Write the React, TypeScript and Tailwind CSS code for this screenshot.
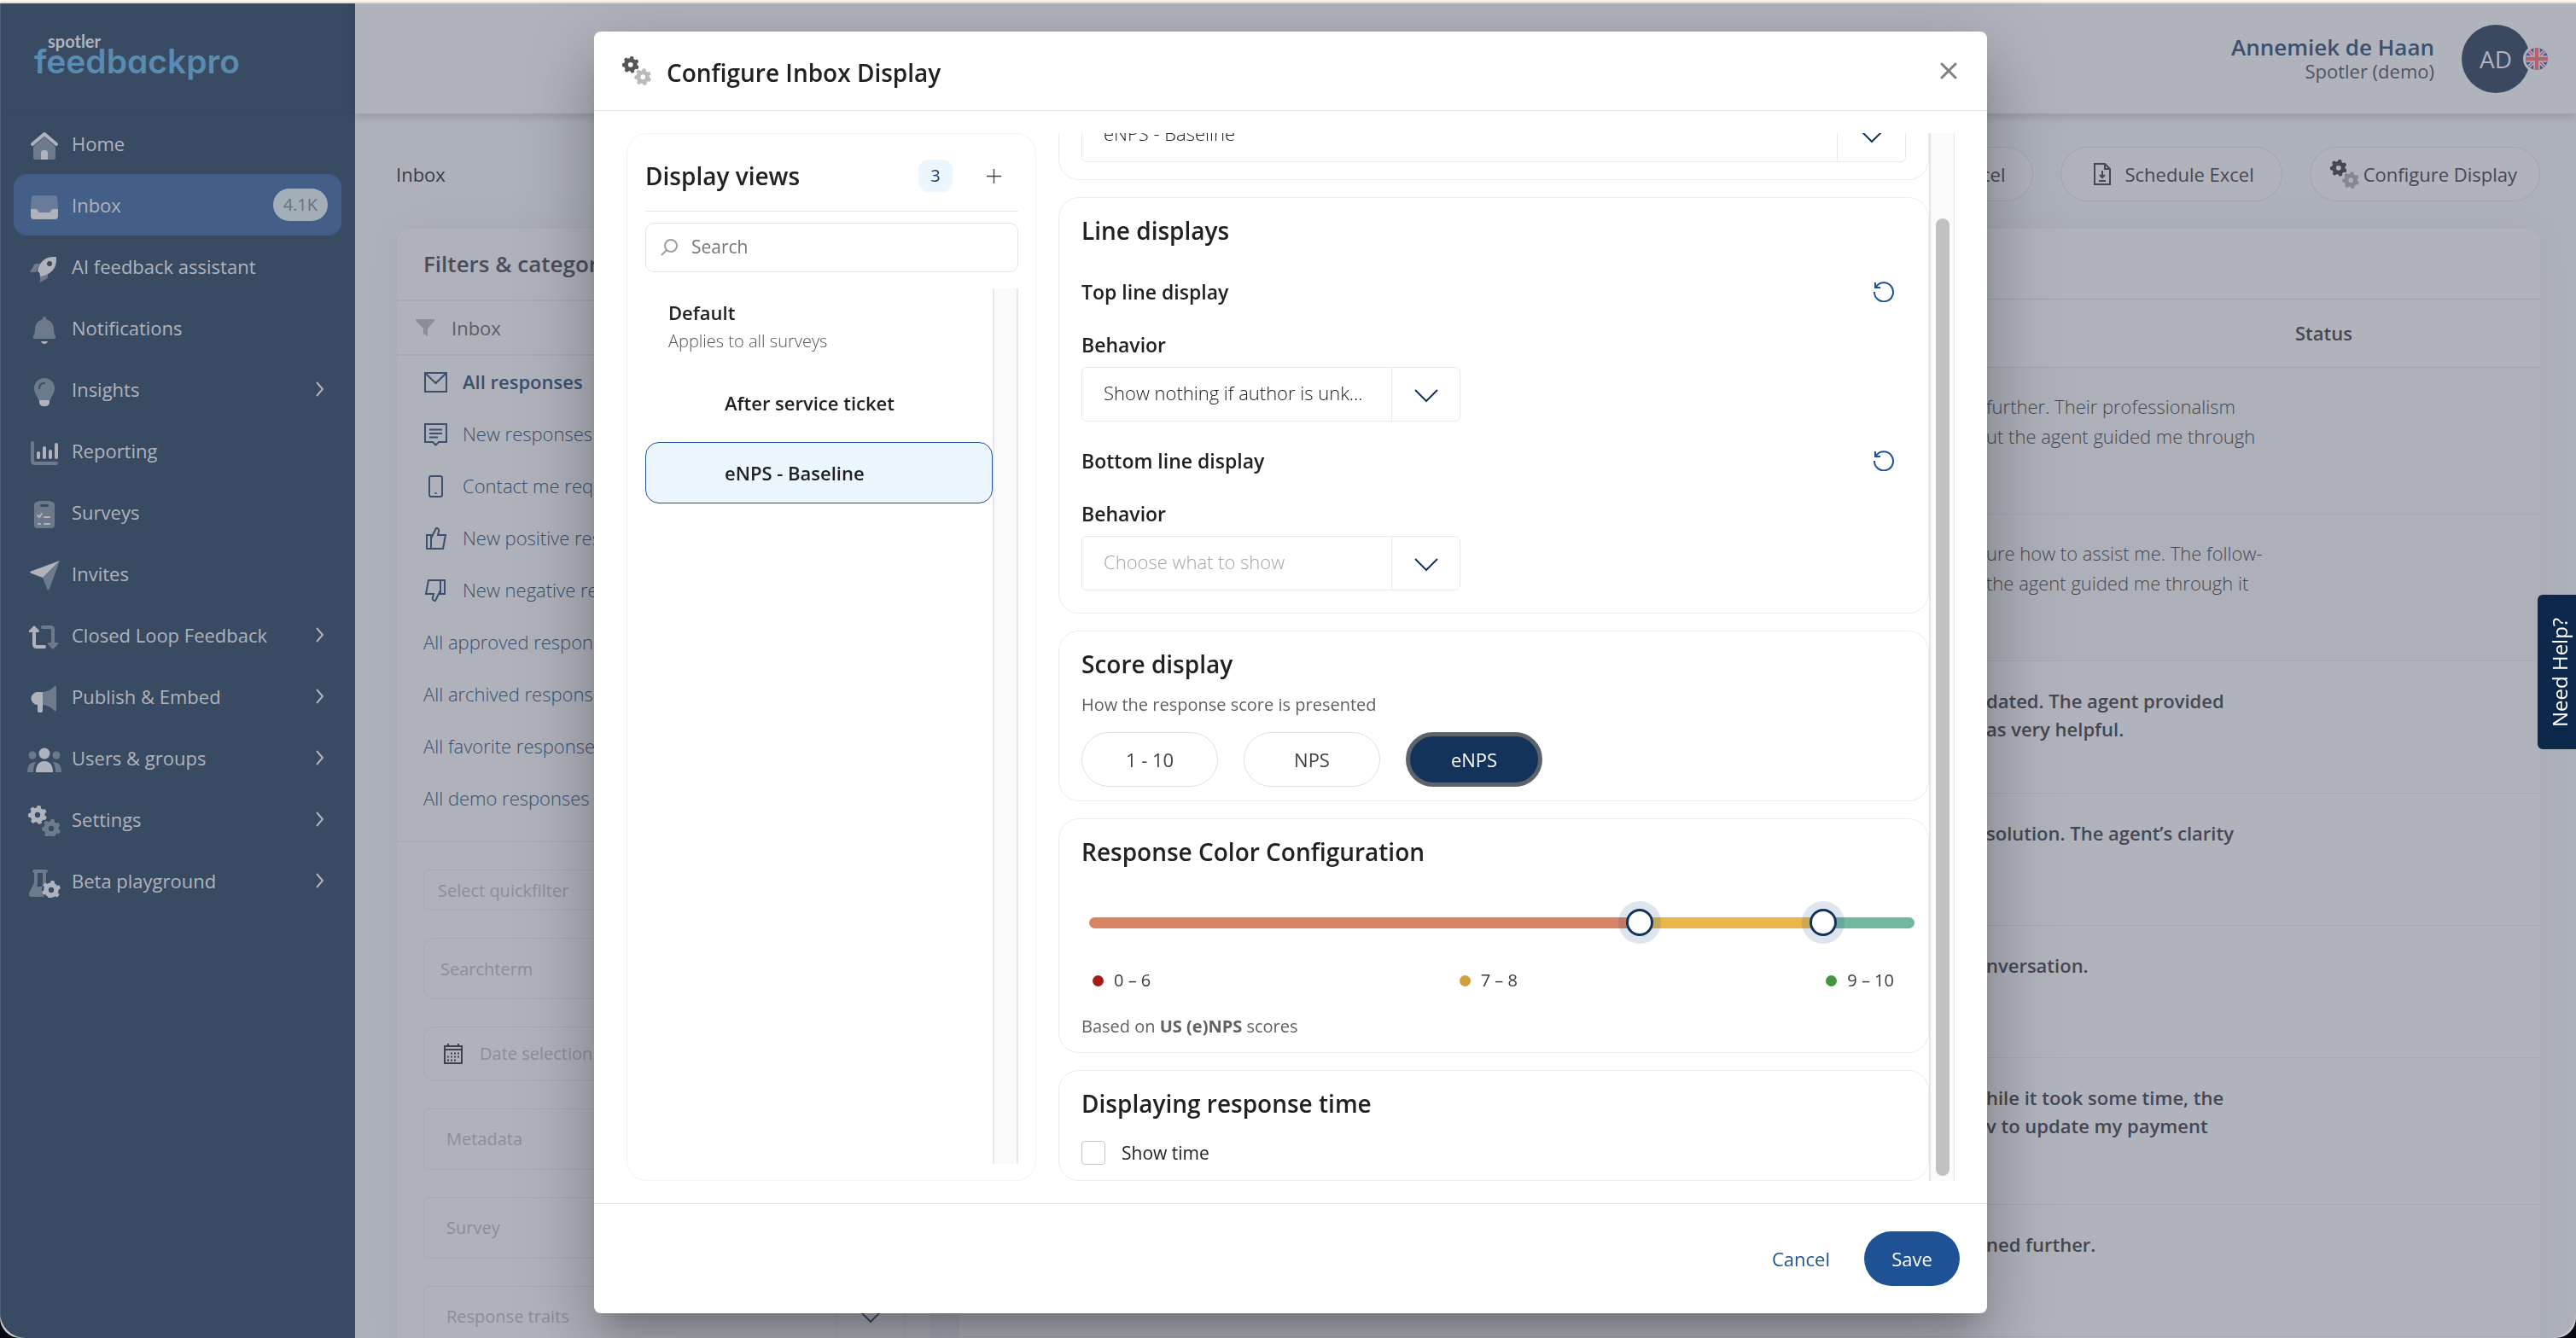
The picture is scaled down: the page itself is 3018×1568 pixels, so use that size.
import { useState, type ReactNode } from 'react'

const SIDEBAR_BG = '#384b63'

type GearProps = { cx: number; cy: number; r: number; teeth?: number; opacity?: number }

const Gear = ({ cx, cy, r, teeth = 7, opacity = 1 }: GearProps) => (
  <g opacity={opacity} transform={`translate(${cx} ${cy})`}>
    <circle r={r * 0.54} fill="none" stroke="currentColor" strokeWidth={r * 0.5} />
    {Array.from({ length: teeth }, (_, i) => (
      <rect
        key={i}
        x={-r * 0.22}
        y={-r}
        width={r * 0.44}
        height={r * 0.45}
        rx={r * 0.14}
        fill="currentColor"
        transform={`rotate(${(360 / teeth) * i + 10})`}
      />
    ))}
  </g>
)

const GearsIcon = ({ className }: { className: string }) => (
  <svg viewBox="0 3 40 40" className={className} aria-hidden="true">
    <Gear cx={12} cy={15} r={11} />
    <Gear cx={28} cy={31} r={11} opacity={0.4} />
  </svg>
)

const NAV_ICONS: Record<string, ReactNode> = {
  home: (
    <>
      <path opacity=".45" d="M20 12 33 24V36q0 3-3 3H10q-3 0-3-3V24z" />
      <path d="M6 21 20 9 34 21" fill="none" stroke="currentColor" strokeWidth="4" strokeLinecap="round" strokeLinejoin="round" />
      <path d="M16 39V31q0-3 3-3h2q3 0 3 3v8z" />
    </>
  ),
  inbox: (
    <>
      <path opacity=".35" d="M8 9H32q3 0 3 3L36 25H29L26 29H14L11 25H4L5 12q0-3 3-3z" />
      <path d="M4 25H11L14 29H26L29 25H36V33q0 4-4 4H8q-4 0-4-4z" />
    </>
  ),
  rocket: (
    <>
      <path opacity=".45" d="M3 27 7 20q1-3 4-3h4l-5 10zM15 39V31l9-4v5q0 2-2 3z" />
      <path d="M33 9C22 8 14 14 12 26q3 1 3 6C28 30 35 22 34 10q0-1-1-1z" />
      <circle cx="26" cy="17" r="3" fill={SIDEBAR_BG} />
    </>
  ),
  bell: (
    <>
      <path opacity=".45" d="M20 7q2 0 2 3c6 2 9 6 9 12q0 5 2 8 1 3-2 3H9q-3 0-2-3 2-3 2-8c0-6 3-10 9-12q0-3 2-3z" />
      <path d="M16 36h8q-1 3-4 3t-4-3z" />
    </>
  ),
  bulb: (
    <>
      <path opacity=".45" d="M20 7a12 12 0 0 1 12 12c0 6-4 9-5 14H13c-1-5-5-8-5-14A12 12 0 0 1 20 7z" />
      <path d="M14 33H26v2q0 5-5 5h-2q-5 0-5-5z" />
      <path d="M14 19q0-6 6-6" fill="none" stroke={SIDEBAR_BG} strokeWidth="2" strokeLinecap="round" />
    </>
  ),
  chart: (
    <g fill="none" stroke="currentColor" strokeLinecap="round" strokeLinejoin="round">
      <path opacity=".45" strokeWidth="4" d="M6 11V32q0 3 3 3H34" />
      <path strokeWidth="4" d="M13 23v5M20 17v11M27 21v7M34 13v15" />
    </g>
  ),
  clipboard: (
    <>
      <path opacity=".45" d="M12 8q1-1 3-1H25q2 0 3 1 4 0 4 4V35q0 4-4 4H12q-4 0-4-4V12q0-4 4-4z" />
      <rect x="15" y="11" width="10" height="3" rx="1.5" fill={SIDEBAR_BG} />
      <path d="M12 24l2 2 3-4M20 26h6M20 34h6M13 34h2" fill="none" stroke="currentColor" strokeWidth="2" strokeLinecap="round" />
    </>
  ),
  plane: (
    <>
      <path d="M38 5 3 18q0 1 2 2l13 5z" />
      <path opacity=".45" d="M38 5 18 25l5 13q1 3 3 0z" />
    </>
  ),
  loop: (
    <>
      <path d="M8 14V31q0 3 3 3H20" fill="none" stroke="currentColor" strokeWidth="4" strokeLinecap="round" />
      <path d="M8 9 14 15q0 2-1 2H3q-2 0-1-2z" />
      <g opacity=".45">
        <path d="M18 11H27q3 0 3 3V30" fill="none" stroke="currentColor" strokeWidth="4" strokeLinecap="round" />
        <path d="M30 37 24 31q0-2 1-2H35q2 0 1 2z" />
      </g>
    </>
  ),
  horn: (
    <>
      <path opacity=".45" d="M18 15Q27 14 32 8q2-1 2 1V36q0 2-2 1Q27 31 18 30z" />
      <path d="M18 15H12a7 7 0 0 0 0 15v7q0 2 2 2h2q2 0 2-2z" />
    </>
  ),
  users: (
    <>
      <circle cx="20" cy="15" r="6.5" />
      <path d="M10 37C10 28 14 24 20 24s10 4 10 13z" />
      <g opacity=".45">
        <circle cx="6" cy="17" r="4.5" />
        <circle cx="34" cy="17" r="4.5" />
        <path d="M0 37C0 29 3 25 10 25 8 28 7 32 7 37zM40 37C40 29 37 25 30 25c2 3 3 7 3 12z" />
      </g>
    </>
  ),
  gears: (
    <>
      <Gear cx={12} cy={15} r={11} />
      <Gear cx={28} cy={31} r={11} opacity={0.45} />
    </>
  ),
  flask: (
    <>
      <path opacity=".45" d="M8 7H22q2 0 2 2t-2 2V22q-5 3-5 9t3 8H5q-4 0-3-5L8 23V11Q6 11 6 9t2-2zM12 11V24l-1 3h6l1-4V11z" fillRule="evenodd" />
      <Gear cx={28} cy={31} r={11} teeth={6} />
    </>
  ),
}

const NAV_ITEMS = [
  { label: 'Home', icon: 'home' },
  { label: 'Inbox', icon: 'inbox', active: true, badge: '4.1K' },
  { label: 'AI feedback assistant', icon: 'rocket' },
  { label: 'Notifications', icon: 'bell' },
  { label: 'Insights', icon: 'bulb', expandable: true },
  { label: 'Reporting', icon: 'chart' },
  { label: 'Surveys', icon: 'clipboard' },
  { label: 'Invites', icon: 'plane' },
  { label: 'Closed Loop Feedback', icon: 'loop', expandable: true },
  { label: 'Publish & Embed', icon: 'horn', expandable: true },
  { label: 'Users & groups', icon: 'users', expandable: true },
  { label: 'Settings', icon: 'gears', expandable: true },
  { label: 'Beta playground', icon: 'flask', expandable: true },
]

const Sidebar = () => (
  <aside className="w-[416px] shrink-0 border-l border-[#4d6079] bg-[#384b63] text-[#b0b3bc]">
    <div className="flex h-[128px] flex-col border-b border-[#35465f] pt-9 pl-[39px]">
      <span className="pl-4 font-[Lato] text-[20px] leading-4 font-bold">spotler</span>
      <span className="font-[Inter] text-[39px] leading-8 font-semibold text-[#5a8bb0] [font-feature-settings:'cv11']">feedbackpro</span>
    </div>
    <nav className="pr-4 pl-[15px]">
      {NAV_ITEMS.map((item) => (
        <a
          key={item.label}
          href="#"
          className={
            item.active
              ? 'flex h-[72px] items-center gap-3 rounded-2xl bg-[#445f87] px-4'
              : 'flex h-[72px] items-center gap-3 px-4'
          }
        >
          <svg viewBox="0 0 40 40" fill="currentColor" className="size-10 shrink-0" aria-hidden="true">
            {NAV_ICONS[item.icon]}
          </svg>
          <span className="flex-1 text-[22px] whitespace-nowrap">{item.label}</span>
          {item.badge && (
            <span className="flex h-[38px] items-center rounded-full bg-[#a3aeb9] px-3 text-[20px] text-[#66737f]">{item.badge}</span>
          )}
          {item.expandable && (
            <svg viewBox="0 0 10 18" className="mr-1 h-[18px] w-[10px]" fill="none" stroke="currentColor" strokeWidth="2" aria-hidden="true">
              <path d="M1 1l7 8-7 8" />
            </svg>
          )}
        </a>
      ))}
    </nav>
  </aside>
)

const UkFlag = () => (
  <svg viewBox="0 0 60 60" className="size-8 rounded-full border-[3px] border-[#b0b3bc]" aria-hidden="true">
    <path fill="#4d5391" d="M0 0h60v60H0z" />
    <path stroke="#b0b3bc" strokeWidth="10" d="M0 0l60 60M60 0L0 60" />
    <path stroke="#b5626f" strokeWidth="4" d="M0 0l60 60M60 0L0 60" />
    <path stroke="#b0b3bc" strokeWidth="17" d="M30 0v60M0 30h60" />
    <path stroke="#b5626f" strokeWidth="10" d="M30 0v60M0 30h60" />
  </svg>
)

const Header = () => (
  <header className="relative flex h-[129px] shrink-0 items-center justify-end gap-8 bg-[#b0b3bc] pr-[54px] shadow-[0_4px_10px_#00000024]">
    <div className="text-right">
      <p className="text-[26px] leading-7 font-semibold text-[#3b506f]">Annemiek de Haan</p>
      <p className="text-[22px] leading-7 text-[#50535e]">Spotler (demo)</p>
    </div>
    <div className="relative flex size-20 items-center justify-center rounded-full bg-[#3b4960] text-[28px] font-medium text-[#b0b3bc]">
      AD
      <span className="absolute top-6 -right-6">
        <UkFlag />
      </span>
    </div>
  </header>
)

const ICON_STROKE = { fill: 'none', stroke: 'currentColor', strokeWidth: 2 }

const INBOX_FILTERS: { label: string; icon?: ReactNode; active?: boolean }[] = [
  { label: 'All responses', active: true, icon: <path d="M2 4H27V26H2zM2 4 14.5 16 27 4" /> },
  { label: 'New responses', icon: <path d="M2 3H27V24H18L14.5 27.5 11 24H2zM7 9.5H22M7 14H22M7 18.5H17" /> },
  { label: 'Contact me requests', icon: <path d="M9 3H20Q22 3 22 5V25Q22 27 20 27H9Q7 27 7 25V5Q7 3 9 3zM13.5 23h2" /> },
  { label: 'New positive responses', icon: <path d="M4 11H9V27H4zM9 15 15 3Q19 3 18 7L17 11H26L23 27H9" /> },
  { label: 'New negative responses', icon: <path d="M25 19H20V3H25zM20 15 14 27Q10 27 11 23L12 19H3L6 3H20" /> },
  { label: 'All approved responses' },
  { label: 'All archived responses' },
  { label: 'All favorite responses' },
  { label: 'All demo responses' },
]

const Chevron = ({ className = 'text-[#13335b]' }: { className?: string }) => (
  <svg viewBox="0 0 28 16" className={`h-4 w-7 ${className}`} {...ICON_STROKE} aria-hidden="true">
    <path d="M1 1l13 13L27 1" />
  </svg>
)

const FilterSelect = ({ label }: { label: string }) => (
  <div className="flex h-[72px] shrink-0 rounded-md border border-[#a5a8b6]">
    <select aria-label={label} className="flex-1 appearance-none px-[26px] text-[20px] text-[#8b8e96]">
      <option>{label}</option>
    </select>
    <span className="flex w-20 items-center justify-center border-l border-[#a5a8b6]">
      <Chevron className="text-[#3b4f6e]" />
    </span>
  </div>
)

const FiltersCard = () => (
  <section className="flex w-[628px] shrink-0 flex-col rounded-t-2xl border-r border-l border-[#a8abb8] bg-[#afb2bb] shadow-[0_0_40px_#9a9dac55]">
    <h2 className="flex h-[83px] shrink-0 items-center px-[31px] text-[26px] font-semibold text-[#4a4d58]">Filters &amp; categories</h2>
    <div className="flex h-[66px] shrink-0 items-center gap-5 border-y-2 border-[#a5a8b6] px-[22px] text-[22px] text-[#5a5d65]">
      <svg viewBox="0 0 22 20" className="h-5 w-[22px]" fill="#8b8e96" aria-hidden="true">
        <path d="M0 0H22V2L14 11V20L9 17V11L0 2z" />
      </svg>
      Inbox
    </div>
    <ul className="flex shrink-0 flex-col border-b border-[#a5a8b6] pb-5 text-[22px] text-[#3b4f6e]">
      {INBOX_FILTERS.map((filter) => (
        <li key={filter.label}>
          <a
            href="#"
            className={
              filter.active
                ? 'flex h-[61px] items-center gap-4 px-[31px] font-semibold'
                : 'flex h-[61px] items-center gap-4 px-[31px] font-light'
            }
          >
            {filter.icon && (
              <svg viewBox="0 0 30 30" className="size-[30px]" {...ICON_STROKE} aria-hidden="true">
                {filter.icon}
              </svg>
            )}
            {filter.label}
          </a>
        </li>
      ))}
    </ul>
    <div className="flex flex-col gap-8 px-[31px] pt-8">
      <input aria-label="Select quickfilter" placeholder="Select quickfilter" className="h-12 shrink-0 rounded-md border border-[#a5a8b6] px-4 text-[20px] placeholder:text-[#8b8e96]" />
      <input aria-label="Searchterm" placeholder="Searchterm" className="h-[72px] shrink-0 rounded-xl border border-[#a5a8b6] px-[19px] text-[20px] placeholder:text-[#8b8e96]" />
      <label className="flex h-16 shrink-0 items-center gap-5 rounded-xl border border-[#a5a8b6] px-[23px] text-[#3f424e]">
        <svg viewBox="0 0 22 24" className="h-6 w-[22px]" {...ICON_STROKE} aria-hidden="true">
          <path d="M1 3H21V23H1zM1 7H21M5 0V4M17 0V4" />
          <path d="M8 11.500H19M4 15.500H19M4 19.500H15" strokeDasharray="2 2" />
        </svg>
        <input aria-label="Date selection" placeholder="Date selection" className="flex-1 text-[20px] placeholder:text-[#8b8e96]" />
      </label>
      <FilterSelect label="Metadata" />
      <FilterSelect label="Survey" />
      <FilterSelect label="Response traits" />
    </div>
  </section>
)

const RESPONSES = [
  { lines: ['further. Their professionalism', 'ut the agent guided me through'], read: true },
  { lines: ['ure how to assist me. The follow-', 'the agent guided me through it'], read: true },
  { lines: ['dated. The agent provided', 'as very helpful.'] },
  { lines: ['solution. The agent’s clarity'] },
  { lines: ['nversation.'] },
  { lines: ['hile it took some time, the', 'v to update my payment'], tall: true },
  { lines: ['ned further.'] },
]

const ResponsesCard = () => (
  <section className="flex-1 rounded-t-2xl bg-[#b0b3bc] pt-[82px] shadow-[0_0_40px_#9a9dac55]">
    <table className="w-full border-t border-[#a0a3b3] text-[22px] text-[#454853]">
      <thead>
        <tr className="h-[80px] border-b border-[#a3a6b4]">
          <th aria-label="Response" />
          <th className="w-[362px]" aria-label="Comment" />
          <th className="w-[287px] text-left font-semibold">Status</th>
        </tr>
      </thead>
      <tbody>
        {RESPONSES.map(({ lines, read, tall }) => (
          <tr
            key={lines[0]}
            className={`border-b border-[#a5a8b6] ${read || tall ? 'h-[172px]' : 'h-[155px]'} ${read ? 'bg-[#adb0b9]' : ''}`}
          >
            <td />
            <td className={read ? 'pt-7 align-top leading-[35px] font-light' : 'pt-[30px] align-top leading-[33px] font-semibold'}>
              {lines.map((line) => (
                <p key={line} className="whitespace-nowrap">{line}</p>
              ))}
            </td>
            <td />
          </tr>
        ))}
      </tbody>
    </table>
  </section>
)

const TOOL_BUTTON = 'flex h-16 items-center rounded-full border border-[#a0a3b3] bg-[#b0b3bc] text-[22px] text-[#454853]'

const FileIcon = () => (
  <svg viewBox="0 0 20 26" className="h-[26px] w-5" {...ICON_STROKE} aria-hidden="true">
    <path d="M1 1H13L19 7V25H1zM13 1V7H19M10 9V17M7 14l3 3 3-3M6 21H14" />
  </svg>
)

const InboxPage = () => (
  <main className="flex flex-1 flex-col overflow-hidden pt-[39px] pr-[42px] pl-12">
    <div className="flex h-16 shrink-0 items-center justify-between">
      <h1 className="text-[22px] text-[#3a3c45]">Inbox</h1>
      <div className="flex gap-8">
        <button type="button" className={`${TOOL_BUTTON} gap-4 px-8`}>
          <FileIcon />
          Export Excel
        </button>
        <button type="button" className={`${TOOL_BUTTON} gap-4 pr-8 pl-[38px]`}>
          <FileIcon />
          Schedule Excel
        </button>
        <button type="button" className={`${TOOL_BUTTON} gap-1 pr-[26px] pl-[22px]`}>
          <GearsIcon className="size-9" />
          Configure Display
        </button>
      </div>
    </div>
    <div className="mt-8 flex flex-1 gap-8">
      <FiltersCard />
      <ResponsesCard />
    </div>
  </main>
)

type DisplaySelectProps = { id: string; value: string; label?: string; placeholder?: boolean; wide?: boolean }

const DisplaySelect = ({ id, value, label, placeholder, wide }: DisplaySelectProps) => (
  <div className={wide ? 'flex h-16 rounded-md border border-[#e8e9ef]' : 'flex h-16 w-[444px] rounded-md border border-[#e8e9ef]'}>
    <select
      id={id}
      aria-label={label}
      className={
        placeholder
          ? 'min-w-0 flex-1 appearance-none pb-1 pl-[25px] text-[22px] font-light text-[#a5a5a5]'
          : 'min-w-0 flex-1 appearance-none pb-1 pl-[25px] text-[22px] font-light text-[#212121]'
      }
    >
      <option>{value}</option>
    </select>
    <span className="flex w-20 items-center justify-center border-l border-[#e8e9ef] pt-1">
      <Chevron />
    </span>
  </div>
)

const CARD = 'shrink-0 rounded-3xl border border-[#ececec] px-[26px]'
const CARD_TITLE = 'text-[28px] leading-9 font-semibold text-[#212121]'

const ResetButton = ({ label }: { label: string }) => (
  <button type="button" aria-label={label} className="mr-[14px] text-[#1f5295]">
    <svg viewBox="0 0 24 24" className="size-6" {...ICON_STROKE} aria-hidden="true">
      <path d="M1 12A11 11 0 1 0 3 6M2 1V7H8" />
    </svg>
  </button>
)

const LineSettings = ({ title, id, value, placeholder }: { title: string; id: string; value: string; placeholder?: boolean }) => (
  <div>
    <div className="flex h-8 items-center justify-between">
      <h4 className="text-[23px] font-semibold text-[#212121]">{title}</h4>
      <ResetButton label={`Reset ${title.toLowerCase()}`} />
    </div>
    <label htmlFor={id} className="mt-[30px] mb-2.5 block text-[23px] leading-8 font-semibold text-[#212121]">
      Behavior
    </label>
    <DisplaySelect id={id} value={value} placeholder={placeholder} />
  </div>
)

const RANGE =
  'pointer-events-none absolute -inset-x-4 top-0 h-8 appearance-none bg-transparent [&::-webkit-slider-thumb]:pointer-events-auto [&::-webkit-slider-thumb]:size-8 [&::-webkit-slider-thumb]:appearance-none [&::-webkit-slider-thumb]:rounded-full [&::-webkit-slider-thumb]:border-[3px] [&::-webkit-slider-thumb]:border-[#13335b] [&::-webkit-slider-thumb]:bg-white [&::-webkit-slider-thumb]:shadow-[0_0_0_9px_#1f529526]'

const ColorRange = () => {
  const [low, setLow] = useState(7)
  const [high, setHigh] = useState(9)

  return (
    <div className="relative -mr-[10px] ml-[9px] flex h-8 items-center">
      <div className="flex h-[13px] flex-1 overflow-hidden rounded-full">
        <span className="bg-[#d98464]" style={{ flexGrow: low - 1 }} />
        <span className="bg-[#e8b747]" style={{ flexGrow: high - low }} />
        <span className="bg-[#72b7a0]" style={{ flexGrow: 10 - high }} />
      </div>
      <input type="range" aria-label="Lower boundary" min={1} max={10} value={low} onChange={(e) => setLow(Number(e.target.value))} className={RANGE} />
      <input type="range" aria-label="Upper boundary" min={1} max={10} value={high} onChange={(e) => setHigh(Number(e.target.value))} className={RANGE} />
    </div>
  )
}

const LegendItem = ({ dot, label }: { dot: string; label: string }) => (
  <span className="flex items-center gap-3">
    <span className={`size-[13px] rounded-full ${dot}`} />
    {label}
  </span>
)

const SCORE_TYPES = ['1 - 10', 'NPS', 'eNPS']

const SettingsPanel = () => {
  const [scoreType, setScoreType] = useState('eNPS')

  return (
    <div className="flex min-w-0 flex-1 overflow-hidden">
      <div className="flex min-w-0 flex-1 flex-col justify-end gap-5 overflow-hidden">
        <section className={`${CARD} pt-5 pb-5`}>
          <DisplaySelect id="survey" label="Survey" value="eNPS - Baseline" wide />
        </section>

        <section className={`${CARD} pt-5 pb-[26px]`}>
          <h3 className={CARD_TITLE}>Line displays</h3>
          <div className="mt-[38px] flex flex-col gap-[30px]">
            <LineSettings title="Top line display" id="top-behavior" value="Show nothing if author is unk..." />
            <LineSettings title="Bottom line display" id="bottom-behavior" value="Choose what to show" placeholder />
          </div>
        </section>

        <section className={`${CARD} pt-5 pb-4`}>
          <h3 className={CARD_TITLE}>Score display</h3>
          <p className="mt-[14px] text-[20px] leading-8 text-[#616161]">How the response score is presented</p>
          <div className="mt-4 flex gap-[30px]">
            {SCORE_TYPES.map((type) => (
              <button
                key={type}
                type="button"
                onClick={() => setScoreType(type)}
                className={
                  type === scoreType
                    ? 'h-16 w-40 rounded-full border-[5px] border-[#5c636c] bg-[#13335b] text-[22px] font-medium text-white'
                    : 'h-16 w-40 rounded-full border border-[#dcdfe2] text-[22px] text-[#3f4347]'
                }
              >
                {type}
              </button>
            ))}
          </div>
        </section>

        <section className={`${CARD} pt-5 pb-[14px]`}>
          <h3 className={`${CARD_TITLE} mb-[49px]`}>Response Color Configuration</h3>
          <ColorRange />
          <div className="mt-9 mr-[14px] ml-[13px] flex items-center justify-between text-[20px] leading-8 text-[#3a3a3a]">
            <LegendItem dot="bg-[#a41e17]" label="0 – 6" />
            <LegendItem dot="bg-[#cea037]" label="7 – 8" />
            <LegendItem dot="bg-[#41973d]" label="9 – 10" />
          </div>
          <p className="mt-[22px] text-[20px] leading-8 text-[#616161]">
            Based on <b>US (e)NPS</b> scores
          </p>
        </section>

        <section className={`${CARD} pt-5 pb-4`}>
          <h3 className={CARD_TITLE}>Displaying response time</h3>
          <label className="mt-6 flex items-center gap-[19px] text-[21px] leading-8 text-[#212121]">
            <input type="checkbox" className="size-7 appearance-none rounded border border-[#c4c5cf] checked:bg-[#1f5295]" />
            Show time
          </label>
        </section>
      </div>
      <div className="w-[30px] shrink-0 border-r border-l-2 border-[#e5e5e5] bg-[#fafafa] pt-[100px] pb-1.5">
        <div className="mx-auto h-full w-4 rounded-full bg-[#c1c1c1]" />
      </div>
    </div>
  )
}

const ViewsPanel = () => (
  <section className="flex w-[480px] shrink-0 flex-col rounded-3xl border border-[#f3f3f3] pr-5 pb-[19px] pl-[21px]">
    <div className="mb-[13px] flex h-[91px] shrink-0 items-center border-b border-[#e6e6ea] pt-2">
      <h3 className={`${CARD_TITLE} flex-1`}>Display views</h3>
      <span className="flex h-[38px] w-10 items-center justify-center rounded-xl bg-[#ebf6ff] text-[20px] font-medium text-[#1d3d6b]">3</span>
      <button type="button" aria-label="Add view" className="mr-5 ml-10 text-[#444]">
        <svg viewBox="0 0 17 17" className="size-[17px]" fill="none" stroke="currentColor" strokeWidth="1.4" aria-hidden="true">
          <path d="M8.5 0V17M0 8.5H17" />
        </svg>
      </button>
    </div>
    <label className="flex h-[58px] shrink-0 items-center gap-4 rounded-[10px] border border-[#e4e5ec] pl-[17px]">
      <svg viewBox="0 0 20 20" className="size-5 text-[#9e9e9e]" {...ICON_STROKE} aria-hidden="true">
        <circle cx="12" cy="8" r="7" />
        <path d="M7 13l-6 6" />
      </svg>
      <input aria-label="Search" placeholder="Search" className="flex-1 text-[21px] placeholder:text-[#757575]" />
    </label>
    <div className="mt-[19px] flex min-h-0 flex-1">
      <div className="flex flex-1 flex-col gap-2.5 text-[22px] font-semibold text-[#212121]">
        <button type="button" className="flex h-[88px] flex-col justify-center pt-1 pl-[27px] text-left">
          <span className="leading-8">Default</span>
          <span className="text-[20px] leading-9 font-light text-[#555]">Applies to all surveys</span>
        </button>
        <button type="button" className="h-[72px] pl-[93px] text-left">After service ticket</button>
        <button type="button" className="h-[72px] rounded-2xl border border-[#1f5194] bg-[#ebf6ff] pl-[92px] text-left">
          eNPS - Baseline
        </button>
      </div>
      <div className="w-[30px] shrink-0 border-r-2 border-l-2 border-[#e8e8e8] bg-[#fafafa]" />
    </div>
  </section>
)

const ConfigureDialog = () => (
  <div className="fixed inset-0 flex justify-center pt-[37px] pb-[29px] pl-[6px]">
    <div
      role="dialog"
      aria-labelledby="dialog-title"
      className="flex h-full w-[1632px] max-w-full flex-col rounded-lg bg-white shadow-[0_22px_30px_-14px_#00000033,0_48px_76px_6px_#00000024,0_18px_92px_16px_#0000001f]"
    >
      <div className="flex h-[93px] shrink-0 items-center border-b border-[#e4e4ea] pr-[35px] pl-8">
        <GearsIcon className="size-9 text-[#555]" />
        <h2 id="dialog-title" className="ml-[17px] flex-1 pt-1 text-[28px] font-semibold text-[#212121]">Configure Inbox Display</h2>
        <button type="button" aria-label="Close" className="text-[#808080]">
          <svg viewBox="0 0 20 20" className="size-5" fill="none" stroke="currentColor" strokeWidth="3" strokeLinecap="round" aria-hidden="true">
            <path d="M2 2l16 16M18 2L2 18" />
          </svg>
        </button>
      </div>
      <div className="flex min-h-0 flex-1 gap-[26px] px-[38px] py-[26px]">
        <ViewsPanel />
        <SettingsPanel />
      </div>
      <div className="flex h-[129px] shrink-0 items-center justify-end gap-10 border-t border-[#e4e4ea] pr-8">
        <button type="button" className="text-[22px] text-[#1f5295]">Cancel</button>
        <button type="button" className="h-16 w-28 rounded-full bg-[#1f5295] text-[22px] font-medium text-white">Save</button>
      </div>
    </div>
  </div>
)

const App = () => (
  <div className="h-screen bg-[#060814] font-['Open_Sans',sans-serif]">
    <div className="h-full overflow-hidden rounded-b-[24px] border-t-2 border-[#fdf6ea] bg-[#d0cdc8]">
      <div className="flex h-full overflow-hidden rounded-b-[30px] border-t-2 border-[#e9dfcc] bg-[#adb1ba]">
        <Sidebar />
        <div className="flex min-w-0 flex-1 flex-col">
          <Header />
          <InboxPage />
        </div>
      </div>
    </div>
    <ConfigureDialog />
    <button
      type="button"
      className="fixed top-[697px] right-0 h-[181px] w-[45px] rotate-180 rounded-r-md bg-[#0c294b] pr-2 text-[24px] font-medium text-white [writing-mode:vertical-rl]"
    >
      Need Help?
    </button>
  </div>
)

export default App
